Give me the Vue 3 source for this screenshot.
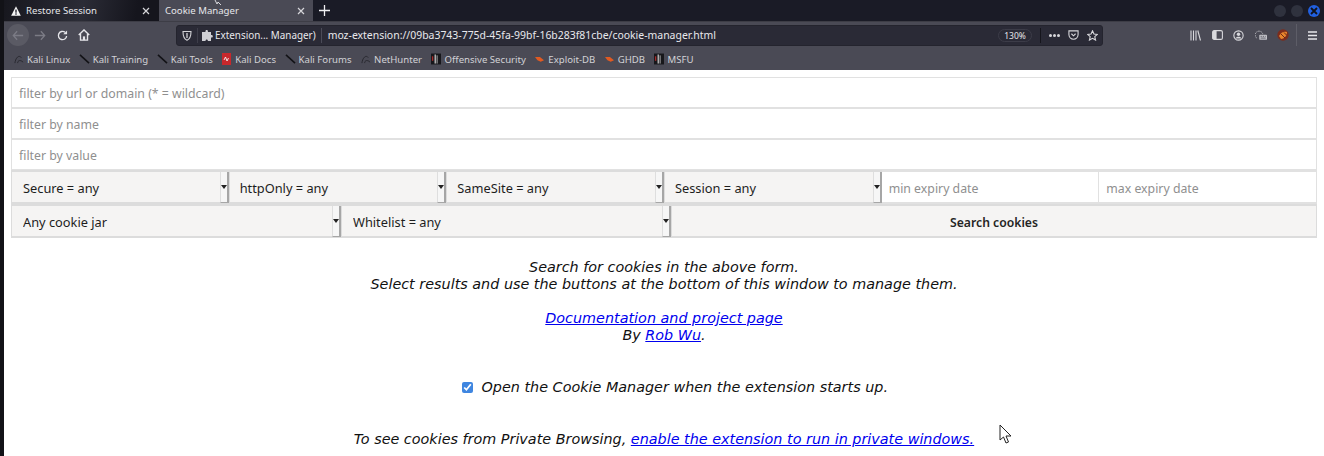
<script setup>
const bookmarks = [
  { label: 'Kali Linux', icon: 'dragon' },
  { label: 'Kali Training', icon: 'sword' },
  { label: 'Kali Tools', icon: 'sword' },
  { label: 'Kali Docs', icon: 'doc' },
  { label: 'Kali Forums', icon: 'sword' },
  { label: 'NetHunter', icon: 'dragon' },
  { label: 'Offensive Security', icon: 'offsec' },
  { label: 'Exploit-DB', icon: 'bug' },
  { label: 'GHDB', icon: 'bug' },
  { label: 'MSFU', icon: 'offsec' },
]
const row1 = ['Secure = any', 'httpOnly = any', 'SameSite = any', 'Session = any']
</script>

<template>
  <div class="page">
    <header class="chrome">
      <div class="tabs">
        <div class="tab inactive">
          <svg class="tab-icon" width="10" height="10" viewBox="0 0 14 14"><path d="M7 .5 13.800 13.500H.2Z" fill="#f4f4f4" /><rect x="6" y="5" width="2" height="4.400" fill="#2a2a35" /><rect x="6" y="10.200" width="2" height="2" fill="#2a2a35" /></svg>
          <span class="tab-title">Restore Session</span>
          <svg class="tab-x" width="8" height="8" viewBox="0 0 8 8"><path d="M1 1l6 6M7 1 1 7" stroke="#d6d6da" stroke-width="1.200" /></svg>
        </div>
        <div class="tab active">
          <span class="tab-title">Cookie Manager</span>
          <svg class="tab-x" width="8" height="8" viewBox="0 0 8 8"><path d="M1 1l6 6M7 1 1 7" stroke="#d6d6da" stroke-width="1.200" /></svg>
        </div>
        <svg class="new-tab" width="11" height="11" viewBox="0 0 11 11"><path d="M5.500 0v11M0 5.500h11" stroke="#f0f0f2" stroke-width="1.300" /></svg>
        <div class="win-buttons">
          <span class="win-dot"></span>
          <span class="win-dot"></span>
          <span class="win-dot close"><svg width="8" height="8" viewBox="0 0 8 8"><path d="M1 1l6 6M7 1 1 7" stroke="#10131c" stroke-width="1.800" /></svg></span>
        </div>
      </div>

      <div class="toolbar">
        <div class="nav">
          <span class="back"><svg width="12" height="11" viewBox="0 0 14 12"><path d="M6 1 1.500 6 6 11M2 6h11" fill="none" stroke="#7b7b85" stroke-width="1.500" /></svg></span>
          <svg class="fwd" width="12" height="11" viewBox="0 0 14 12"><path d="M8 1l4.500 5L8 11M12 6H1" fill="none" stroke="#7b7b85" stroke-width="1.500" /></svg>
          <svg class="reload" width="11" height="11" viewBox="0 0 12 12"><path d="M10.500 6.500A4.500 4.500 0 1 1 8.800 2.500" fill="none" stroke="#e6e6ea" stroke-width="1.500" /><path d="M11 .5v4.200H6.800Z" fill="#e6e6ea" /></svg>
          <svg class="home" width="12" height="12" viewBox="0 0 13 13"><path d="M.8 6.500 6.500 1l5.700 5.500M2.700 5.500V12h7.600V5.500" fill="none" stroke="#e6e6ea" stroke-width="1.500" /><rect x="5.300" y="8" width="2.400" height="4" fill="#e6e6ea" /></svg>
        </div>
        <div class="urlbar">
          <svg class="shield" width="10" height="11" viewBox="0 0 10 11"><path d="M1 1.500h8c0 4.500-1 7.500-4 8.800-3-1.300-4-4.300-4-8.800Z" fill="none" stroke="#d2d2d6" stroke-width="1.100" /><path d="M5 3v5" stroke="#d2d2d6" stroke-width="1.300" /></svg>
          <span class="sep"></span>
          <svg class="puzzle" width="12" height="12" viewBox="0 0 12 12"><path d="M0 3h3.500c-.6-2.600 3-2.600 2.400 0H9v3c2.500-.5 2.500 3 0 2.400V12H5.800c.5-2-2.700-2-2.200 0H0Z" fill="#cfcfd4" /></svg>
          <span class="ext-name">Extension... Manager)</span>
          <span class="sep wide"></span>
          <span class="url">moz-extension://09ba3743-775d-45fa-99bf-16b283f81cbe/cookie-manager.html</span>
          <span class="zoom-pill">130%</span>
          <span class="sep tall"></span>
          <span class="dots"><i></i><i></i><i></i></span>
          <svg class="pocket" width="11" height="10" viewBox="0 0 13 12"><path d="M1 1h11v4.500a5.500 5.500 0 0 1-11 0Z" fill="none" stroke="#d8d8dc" stroke-width="1.300" /><path d="M4 4.500l2.500 2.500L9 4.500" fill="none" stroke="#d8d8dc" stroke-width="1.300" /></svg>
          <svg class="star" width="11" height="11" viewBox="0 0 13 13"><path d="M6.500 1 8.200 4.800l4 .4-3 2.700.9 4-3.600-2.100-3.600 2.100.9-4-3-2.700 4-.4Z" fill="none" stroke="#d8d8dc" stroke-width="1.300" /></svg>
        </div>
        <div class="tools">
          <svg width="11" height="11" viewBox="0 0 11 11"><path d="M1 .5v10M3.500 .5v10M6 .5v10M7.800 .5l2.700 10" stroke="#d8d8dc" stroke-width="1.100" fill="none" /></svg>
          <svg width="11" height="10" viewBox="0 0 11 10"><rect x=".6" y=".6" width="9.800" height="8.800" rx="1.500" fill="none" stroke="#d8d8dc" stroke-width="1.100" /><rect x="1" y="1" width="3.600" height="8" fill="#d8d8dc" /></svg>
          <svg width="11" height="11" viewBox="0 0 13 13"><circle cx="6.500" cy="6.500" r="5.500" fill="none" stroke="#d8d8dc" stroke-width="1.300" /><circle cx="6.500" cy="5" r="2" fill="#d8d8dc" /><path d="M2.800 10c1-2.600 6.400-2.600 7.400 0Z" fill="#d8d8dc" /></svg>
          <svg width="12" height="11" viewBox="0 0 14 12"><path d="M2 9a4.500 4.500 0 1 1 7-5" fill="none" stroke="#c2c2c8" stroke-width="1.100" stroke-dasharray="1.500 1" /><rect x="5" y="5" width="9" height="6" rx="1" fill="#c2c2c8" /><path d="M6.500 7h1.500M9 7h1.500M11.500 7h1M6.500 9h6" stroke="#4a4a55" stroke-width=".9" /></svg>
          <svg width="12" height="12" viewBox="0 0 12 12"><circle cx="6" cy="6" r="5.700" fill="#7c2c1c" /><path d="M2 7c2-4 5-5 8-4 0 4-3 7-6 7Z" fill="#e8842c" /><path d="M4 5l4 4M7 3.500l2.500 2.500" stroke="#5c2216" stroke-width=".9" /></svg>
          <span class="tool-sep"></span>
          <svg class="burger" width="9" height="9" viewBox="0 0 9 9"><path d="M0 1h9M0 4.500h9M0 8h9" stroke="#e6e6ea" stroke-width="1.300" /></svg>
        </div>
      </div>

      <nav class="bookmarks">
        <span v-for="b in bookmarks" :key="b.label" class="bookmark">
          <span class="bm-icon">
            <svg v-if="b.icon === 'dragon'" width="10" height="10" viewBox="0 0 11 11"><path d="M1 10C2 3 6 1 8 4M4 10c0-3 3-4 6-1" fill="none" stroke="#26262c" stroke-width="1" /></svg>
            <svg v-else-if="b.icon === 'sword'" width="11" height="10" viewBox="0 0 12 11"><path d="M1 1l10 9" stroke="#121216" stroke-width="1.700" /></svg>
            <svg v-else-if="b.icon === 'doc'" width="9" height="12" viewBox="0 0 9 12"><rect width="9" height="12" fill="#c8282c" /><path d="M2 7l1.500-3L5 8l1.500-3" fill="none" stroke="#f4f4f4" stroke-width=".9" /></svg>
            <svg v-else-if="b.icon === 'bug'" width="9" height="8" viewBox="0 0 11 9"><path d="M0 2l6 0 5 4-4 2-4-2Z" fill="#e05a22" /></svg>
            <svg v-else width="10" height="12" viewBox="0 0 11 12"><rect width="11" height="12" fill="#17171b" /><rect x="4" y="1" width="1.200" height="10" fill="#e4e4e4" /><rect x="6.200" y="2" width="1" height="9" fill="#b9b9b9" /><rect x="1" y="3" width="1.500" height="5" fill="#a52a2a" /></svg>
          </span>
          <span>{{ b.label }}</span>
        </span>
      </nav>
    </header>

    <main class="content">
      <form class="form" @submit.prevent>
        <input class="field" placeholder="filter by url or domain (* = wildcard)" />
        <input class="field" placeholder="filter by name" />
        <input class="field" placeholder="filter by value" />
        <div class="row six">
          <div v-for="s in row1" :key="s" class="sel">
            <select><option>{{ s }}</option></select>
            <span class="arrow"></span>
          </div>
          <input class="field small" placeholder="min expiry date" />
          <input class="field small" placeholder="max expiry date" />
        </div>
        <div class="row bottom">
          <div class="sel"><select><option>Any cookie jar</option></select><span class="arrow"></span></div>
          <div class="sel"><select><option>Whitelist = any</option></select><span class="arrow"></span></div>
          <button class="search" type="button">Search cookies</button>
        </div>
      </form>

      <div class="info">
        <p>Search for cookies in the above form.<br />Select results and use the buttons at the bottom of this window to manage them.</p>
        <p class="docs"><a href="#">Documentation and project page</a><br />By <a href="#">Rob Wu</a>.</p>
        <label class="startup"><input type="checkbox" checked /> Open the Cookie Manager when the extension starts up.</label>
        <p class="private">To see cookies from Private Browsing, <a href="#">enable the extension to run in private windows.</a></p>
      </div>
    </main>

    <svg class="cursor" width="14" height="20" viewBox="0 0 14 20"><path d="M1 1v15l3.500-3 2.500 6 2.500-1-2.500-6H12Z" fill="#fff" stroke="#222" stroke-width="1" /></svg>
    <svg class="cursor-top" width="10" height="6" viewBox="0 0 10 6"><path d="M1 0l2 4 1-2 3 3" fill="none" stroke="#d8d8dc" stroke-width="1" /></svg>
  </div>
</template>

<style>
html, body { margin: 0; background: #fff; }
</style>

<style scoped>
.page {
  position: relative;
  width: 1324px;
  height: 456px;
  overflow: hidden;
  background: #fff;
  font-family: "Noto Sans", sans-serif;
  box-shadow: inset 4px 0 0 #121217;
}
.chrome { margin-left: 4px; color: #e6e6ea; }
.tabs {
  display: flex;
  align-items: center;
  height: 21px;
  background: #1a1b26;
  font-size: 9.600px;
}
.tab {
  display: flex;
  align-items: center;
  height: 21px;
  box-sizing: border-box;
  width: 155px;
}
.tab.inactive { background: linear-gradient(100deg, #17171e, #2b2c36 50%, #15151d 85%); padding: 0 9px 0 7px; }
.tab.active { width: 154px; background: #4a4a55; padding: 0 8px 0 6px; }
.tab-title { flex: 1; padding-left: 5px; white-space: nowrap; }
.tab.active .tab-title { padding-left: 0; }
.tab-x { flex: none; }
.new-tab { margin-left: 6px; }
.win-buttons { display: flex; gap: 5px; margin-left: auto; margin-right: 4px; }
.win-dot {
  display: flex;
  align-items: center;
  justify-content: center;
  width: 12px;
  height: 12px;
  border-radius: 50%;
  background: #2f323e;
}
.win-dot.close { background: #2160e0; }
.toolbar {
  display: flex;
  align-items: center;
  height: 26px;
  padding-top: 1px;
  background: #4a4a55;
  border-top: 1px solid #3d3d46;
  box-sizing: border-box;
}
.nav { display: flex; align-items: center; width: 172px; }
.back {
  display: flex;
  align-items: center;
  justify-content: center;
  width: 22px;
  height: 22px;
  margin-left: 3px;
  border-radius: 50%;
  background: #5a5a64;
}
.fwd { margin-left: 5px; }
.reload { margin-left: 11px; }
.home { margin-left: 10px; }
.urlbar {
  display: flex;
  align-items: center;
  width: 927px;
  height: 21px;
  box-sizing: border-box;
  padding: 0 4px 0 5px;
  background: #2a2a36;
  border-radius: 3px;
  border: 1px solid #24242e;
  font-size: 9.900px;
}
.shield { flex: none; }
.sep { width: 1px; height: 15px; margin: 0 4px 0 5px; background: #3e3e4a; }
.sep.wide { margin: 0 6px 0 5px; background: #4b4b58; }
.puzzle { flex: none; margin-right: 1px; }
.ext-name, .url { white-space: nowrap; color: #e8e8ec; }
.url { flex: 1; font-size: 10.450px; }
.zoom-pill {
  box-sizing: border-box;
  width: 34px;
  text-align: center;
  height: 13px;
  line-height: 11px;
  font-size: 8.500px;
  border: 1px solid #3c3c48;
  border-radius: 7px;
}
.sep.tall { height: 15px; margin: 0 8px; background: #15151c; }
.dots { display: flex; gap: 1px; margin-right: 8px; }
.dots i { width: 3px; height: 3px; border-radius: 50%; background: #d8d8dc; }
.pocket { margin-right: 8px; }
.tools { display: flex; align-items: center; gap: 10.500px; margin-left: 87px; }
.tool-sep { width: 1px; height: 22px; margin-left: -3.500px; background: #5d5d67; }
.bookmarks {
  display: flex;
  align-items: center;
  gap: 8.500px;
  height: 23px;
  padding: 1px 0 0 9px;
  box-sizing: border-box;
  background: #4a4a55;
  font-size: 9.600px;
  color: #d2d2d6;
}
.bookmark { display: flex; align-items: center; gap: 3px; white-space: nowrap; }
.bm-icon { display: flex; justify-content: center; width: 11px; }
.content { margin-left: 4px; padding: 7px 7px 0; }
.form { display: flex; flex-direction: column; }
.field {
  box-sizing: border-box;
  width: 100%;
  height: 32px;
  margin-bottom: -1px;
  padding: 2px 7px 0;
  border: 1px solid #e1e1e1;
  border-bottom-width: 2px;
  background: #fff;
  font: 12.300px "Noto Sans", sans-serif;
  color: #222;
  outline: none;
  min-width: 0;
}
.field::placeholder { color: #8f8f8f; opacity: 1; }
.field.small { height: 34px; margin: 0; border-top-width: 2px; border-left: 0; }
.row { display: grid; height: 34px; }
.six { grid-template-columns: repeat(6, 1fr); }
.bottom { grid-template-columns: 330px 330px 1fr; }
.sel { position: relative; min-width: 0; }
.sel select {
  appearance: none;
  box-sizing: border-box;
  width: 100%;
  height: 100%;
  padding: 2px 0 0 11px;
  border: 1px solid #dcdcdc;
  border-width: 2px 1px;
  border-radius: 0;
  background: #f5f4f3;
  font: 12.800px "Noto Sans", sans-serif;
  color: #1d1d1d;
  outline: none;
}
.six .sel + .sel select { padding-left: 10px; }
.arrow {
  position: absolute;
  top: 2px;
  right: 0;
  bottom: 1px;
  width: 9px;
  background: #f6f6f6;
  border-left: 1px solid #dedede;
  border-right: 2px solid #a6a6a6;
  border-bottom: 1px solid #a6a6a6;
  box-sizing: border-box;
}
.arrow::after {
  content: "";
  position: absolute;
  top: 13px;
  left: 0;
  border: 3px solid transparent;
  border-top: 4px solid #222;
  border-bottom: 0;
}
.search {
  padding-top: 3px;
  border: 1px solid #dcdcdc;
  border-width: 2px 1px;
  background: #f5f4f3;
  font: 600 12.200px "Noto Sans", sans-serif;
  color: #242424;
}
.info {
  margin-top: 21px;
  text-align: center;
  font: italic 14.370px/17px "DejaVu Sans", sans-serif;
  color: #111;
}
.info p { margin: 0; }
.info a { color: #0000ee; text-decoration: underline; }
.docs { padding-top: 17px; }
.startup { display: block; margin-top: 35px; padding-left: 22px; }
.startup input { width: 11px; height: 11px; margin: 0 4px 0 0; accent-color: #3f86e0; vertical-align: -1px; }
.private { padding-top: 35px; }
.cursor { position: absolute; left: 999px; top: 424px; }
.cursor-top { position: absolute; left: 214px; top: 0; }
</style>
